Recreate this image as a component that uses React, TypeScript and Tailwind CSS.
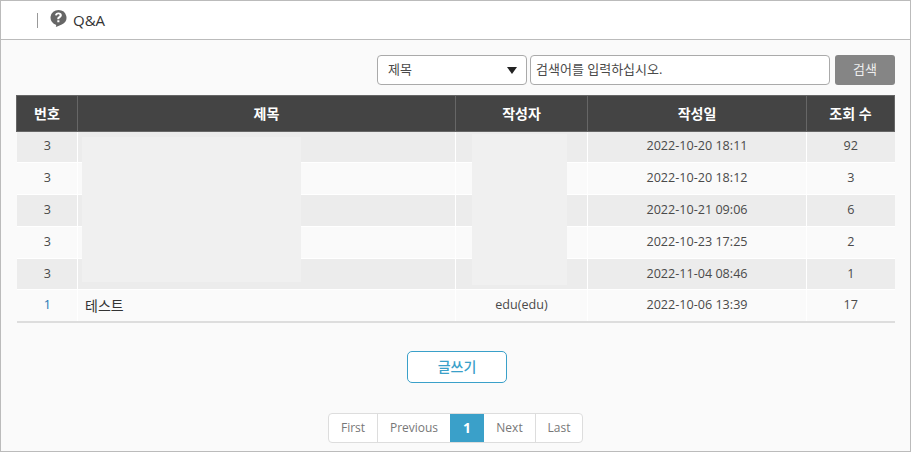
import React from "react";

const ROWS = [
  { no: "3", title: "", writer: "", date: "2022-10-20 18:11", views: "92" },
  { no: "3", title: "", writer: "", date: "2022-10-20 18:12", views: "3" },
  { no: "3", title: "", writer: "", date: "2022-10-21 09:06", views: "6" },
  { no: "3", title: "", writer: "", date: "2022-10-23 17:25", views: "2" },
  { no: "3", title: "", writer: "", date: "2022-11-04 08:46", views: "1" },
  { no: "1", title: "테스트", writer: "edu(edu)", date: "2022-10-06 13:39", views: "17" },
];

const PAGES = [
  { label: "First", cls: "w-[49px] border-r border-[#dddddd]" },
  { label: "Previous", cls: "w-[72px]" },
  { label: "1", cls: "w-[34px] bg-[#3aa0c9] text-[14px] font-bold text-white" },
  { label: "Next", cls: "w-[52px] border-r border-[#dddddd]" },
  { label: "Last", cls: "w-[46px]" },
];

function QuestionBubble() {
  return (
    <svg width="17" height="17" viewBox="0 0 17 17" className="block">
      <path
        fill="#666666"
        fillRule="evenodd"
        d="M8.500 0a8 7.600 0 0 1 3.300 14.500L6.600 16.800c-.5.2-.8-.1-.7-.5l.4-1.400A8 7.600 0 0 1 8.500 0zM8.500 2.500C6.500 2.500 5.200 3.600 5 5.300l2 .3c.1-.8.600-1.300 1.400-1.300.7 0 1.200.4 1.200 1 0 .5-.3.8-1 1.300-1 .7-1.300 1.200-1.300 2.200v.5h2v-.3c0-.5.200-.8 1-1.300 1.100-.7 1.500-1.500 1.500-2.500 0-1.700-1.300-2.700-3.300-2.700zM7.300 10.300v2h2.100v-2H7.300z"
      />
    </svg>
  );
}

export default function App() {
  return (
    <div className="h-[452px] w-[911px] overflow-hidden border border-[#bbbbbb] bg-[#fafafa] font-['Open_Sans','Noto_Sans_CJK_KR',sans-serif] text-[12.6px] text-[#4a4a4a]">
      {/* Header */}
      <header className="flex h-[39px] items-center border-b border-[#bbbbbb] bg-white pl-9">
        <div className="h-[15px] w-px bg-[#999999]" />
        <div className="ml-[12px] mb-[3px]">
          <QuestionBubble />
        </div>
        <div className="ml-[6px] text-[15px] text-[#333333]">Q&amp;A</div>
      </header>

      <div className="relative px-[15px] pt-[15px]">
        {/* Search */}
        <div className="flex h-[30px] justify-end text-[13px]">
          <div className="flex w-[150px] items-center justify-between rounded-[4px] border border-[#aaaaaa] bg-white pl-[10px] pr-[9px]">
            <span>제목</span>
            <span className="h-0 w-0 border-x-[5px] border-t-[7px] border-x-transparent border-t-[#222222]" />
          </div>
          <div className="ml-[3px] flex w-[300px] items-center rounded-[4px] border border-[#aaaaaa] bg-white pl-[5px]">
            검색어를 입력하십시오.
          </div>
          <button className="ml-[5px] w-[60px] rounded-[3px] bg-[#858585] text-[#eeeeee]">검색</button>
        </div>

        {/* Table */}
        <table className="mt-[10px] w-[878px] table-fixed border-collapse border-b-2 border-[#dddddd] text-center">
          <colgroup>
            <col className="w-[61px]" />
            <col className="w-[378px]" />
            <col className="w-[132px]" />
            <col className="w-[219px]" />
            <col className="w-[88px]" />
          </colgroup>
          <thead>
            <tr className="h-[35.5px] bg-[#444444] text-[14px] font-bold text-white">
              {["번호", "제목", "작성자", "작성일", "조회 수"].map((h) => (
                <th key={h} className="border border-[#666666]">
                  {h}
                </th>
              ))}
            </tr>
          </thead>
          <tbody>
            {ROWS.map((r, i) => (
              <tr key={i} className={i % 2 === 0 && i < 5 ? "h-[31.8px] bg-[#ececec]" : "h-[31.8px] bg-[#fafafa]"}>
                <td className="border border-white border-l-0 pl-[1px]">
                  <span className={r.no === "1" ? "text-[#1f77b4]" : ""}>{r.no}</span>
                </td>
                <td className="border border-white pl-[7px] text-left text-[14px] text-[#333333]">{r.title}</td>
                <td className="border border-white">{r.writer}</td>
                <td className="border border-white">{r.date}</td>
                <td className="border border-white border-r-0">{r.views}</td>
              </tr>
            ))}
          </tbody>
        </table>

        {/* Blurred out cells */}
        <div className="absolute left-[81px] top-[97px] h-[145px] w-[219px] bg-[#f0f0f0]" />
        <div className="absolute left-[471px] top-[94px] h-[151px] w-[95px] bg-[#f0f0f0]" />

        {/* Write button */}
        <div className="mt-[28px] flex justify-center pl-[3px]">
          <button className="h-[32px] w-[100px] rounded-[5px] border border-[#3aa0c9] bg-white text-[14px] font-medium text-[#3aa0c9]">
            글쓰기
          </button>
        </div>

        {/* Pagination */}
        <div className="mt-[30px] flex justify-center">
          <div className="flex h-[30px] overflow-hidden rounded-[4px] border border-[#dddddd] bg-white text-[12px] text-[#777777]">
            {PAGES.map((p) => (
              <div key={p.label} className={`flex items-center justify-center ${p.cls}`}>
                {p.label}
              </div>
            ))}
          </div>
        </div>
      </div>
    </div>
  );
}
